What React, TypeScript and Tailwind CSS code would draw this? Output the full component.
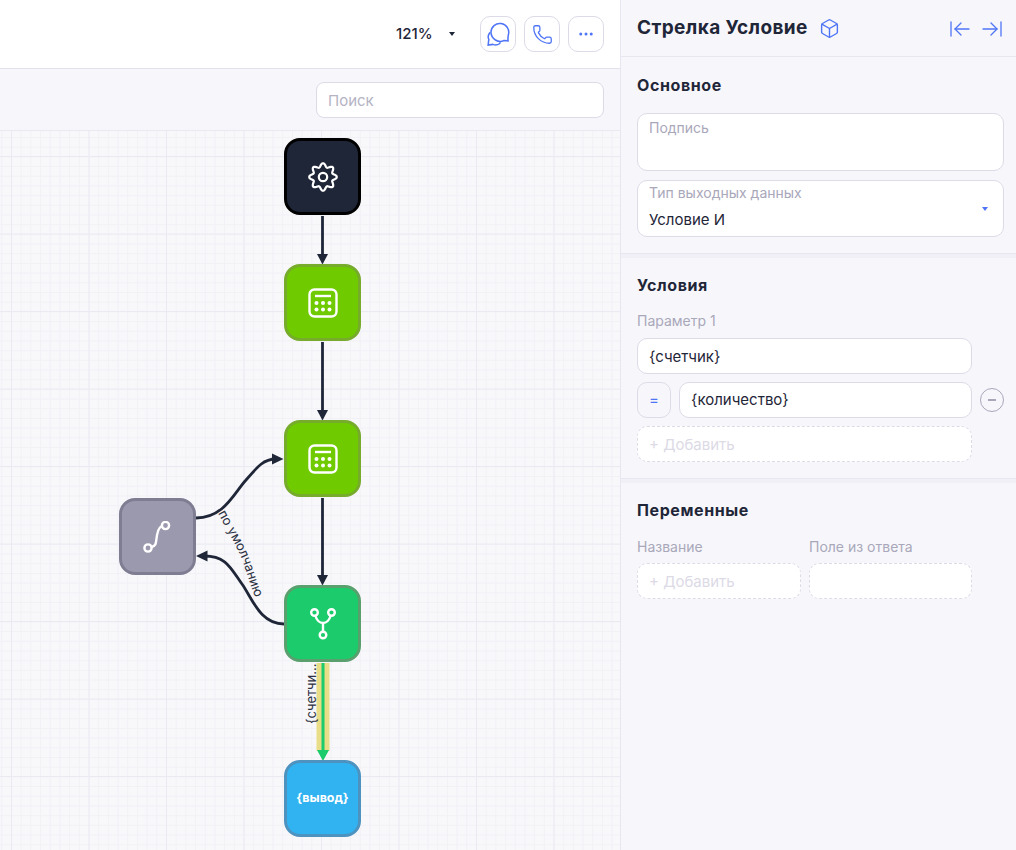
import { ArrowLeftToLine, ArrowRightToLine, Box, Ellipsis, Phone } from "lucide-react"

// 8 rounded teeth, traced around the centre of a 30x30 box
const gearOutline =
  Array.from({ length: 96 }, (_, i) => {
    const angle = (i / 96) * Math.PI * 2
    const radius = 11.9 + 1.9 * Math.cos(angle * 8)
    return `${(15 + radius * Math.sin(angle)).toFixed(2)} ${(15 - radius * Math.cos(angle)).toFixed(2)}`
  })
    .join("L")
    .replace(/^/, "M") + "Z"

function GearIcon() {
  return (
    <svg width="30" height="30" viewBox="0 0 30 30" fill="none" stroke="white" strokeWidth="2.200">
      <path d={gearOutline} strokeLinejoin="round" />
      <circle cx="15" cy="15" r="4.200" />
    </svg>
  )
}

function CalculatorIcon() {
  return (
    <svg width="30" height="30" viewBox="0 0 30 30" fill="none" stroke="white" strokeWidth="2.400">
      <rect x="1.500" y="1.500" width="27" height="27" rx="5" />
      <path d="M7 8h16" strokeWidth="2.400" />
      <g fill="white" stroke="none">
        <circle cx="8.500" cy="15" r="2" />
        <circle cx="15" cy="15" r="2" />
        <circle cx="21.500" cy="15" r="2" />
        <circle cx="8.500" cy="21.500" r="2" />
        <circle cx="15" cy="21.500" r="2" />
        <circle cx="21.500" cy="21.500" r="2" />
      </g>
    </svg>
  )
}

function RouteIcon() {
  return (
    <svg width="30" height="32" viewBox="0 0 30 32" fill="none" stroke="white" strokeWidth="2.400">
      <circle cx="5" cy="27" r="3.600" />
      <circle cx="22.500" cy="4.500" r="3.600" />
      <path d="M8.500 26c6-1 4-7 6-14 1-4 2-6 4.500-7" />
    </svg>
  )
}

function BranchIcon() {
  return (
    <svg width="26" height="32" viewBox="0 0 26 32" fill="none" stroke="white" strokeWidth="2.400">
      <circle cx="4.500" cy="4.500" r="3.300" />
      <circle cx="21.500" cy="4.500" r="3.300" />
      <circle cx="13" cy="27" r="3.300" />
      <path d="M13 23.500V15M5.500 8c1 4 4 7 7.500 7s6.500-3 7.500-7" />
    </svg>
  )
}

function ChatIcon() {
  return (
    <svg width="26" height="26" viewBox="0 0 24 24" fill="none" stroke="#4f75f6" strokeWidth="1.400">
      <path d="M5.500 10.500a8.200 8.200 0 1 1 16 2.500c-.3 2-.5 3-.2 5.300l-4-.2c-5 2.500-11.500-1.500-11.800-7.600Z" />
      <path d="M4.800 10.500c-1.800 2-2.300 4.500-1.300 6.500l-.6 5.200 4.400-.6c2 .8 4.200.8 6-.6l1-1.300" />
    </svg>
  )
}

function IconButton({ children }: { children: React.ReactNode }) {
  return (
    <button className="flex h-9 w-9 items-center justify-center rounded-[10px] border border-[#dddbe8] bg-white">
      {children}
    </button>
  )
}

function Node({ className, children }: { className: string; children: React.ReactNode }) {
  return (
    <div
      className={
        "absolute flex h-[77px] w-[77px] items-center justify-center rounded-[16px] border-[3px] " + className
      }
    >
      {children}
    </div>
  )
}

function Edges() {
  return (
    <svg className="absolute top-0 left-0" width="620" height="720" viewBox="0 130 620 720" fill="none">
      <path d="M316.500 662h13v88h-13z" fill="#e9dd87" />
      <path d="M323 662v88" stroke="#1ccb6b" strokeWidth="3" />
      <path d="M317 749h12l-6 11z" fill="#1ccb6b" />
      <g stroke="#1f2638" strokeWidth="2.800">
        <path d="M322.500 215v40" />
        <path d="M322.500 341v70" />
        <path d="M322.500 497v78" />
        <path d="M196 517c28 0 38-25 50-38 12-14 18-21 30-21" />
        <path d="M284 623c-24 0-32-26-42-40-12-17-16-28-38-28" />
      </g>
      <g fill="#1f2638">
        <path d="M317 253h11l-5.500 10.500z" />
        <path d="M317 409h11l-5.500 10.500z" />
        <path d="M317 574h11l-5.500 10.500z" />
        <path d="M272 452.500v11l11.500-5.500z" />
        <path d="M207.500 549.500v11l-11.500-5.500z" />
      </g>
      <defs>
        <path id="default-edge-label" d="M218 512c8 16 16 28 22 42 6 13 9 28 16 44" />
      </defs>
      <text fontSize="13" fill="#2b3040" fontFamily="Inter, sans-serif">
        <textPath href="#default-edge-label">по умолчанию</textPath>
      </text>
      <text x="-723" y="316" transform="rotate(-90)" fontSize="13" fill="#2b3040" fontFamily="Inter, sans-serif">
        {"{счетчи..."}
      </text>
    </svg>
  )
}

function Canvas() {
  return (
    <div className="relative flex-1 bg-[#f8f8fb] bg-[linear-gradient(#eaeaf2_1px,transparent_1px),linear-gradient(90deg,#eaeaf2_1px,transparent_1px),linear-gradient(#f1f1f6_1px,transparent_1px),linear-gradient(90deg,#f1f1f6_1px,transparent_1px)] bg-[size:77.500px_77.500px,77.500px_77.500px,9.690px_9.690px,9.690px_9.690px] bg-[position:11px_25px,11px_25px,1.300px_6px,1.300px_6px]">
      <Edges />
      <Node className="top-[7px] left-[284px] border-black bg-[#1f2638]">
        <GearIcon />
      </Node>
      <Node className="top-[133px] left-[284px] border-[#76ab2c] bg-[#6fcb00]">
        <CalculatorIcon />
      </Node>
      <Node className="top-[289px] left-[284px] border-[#76ab2c] bg-[#6fcb00]">
        <CalculatorIcon />
      </Node>
      <Node className="top-[367px] left-[119px] border-[#7f7d92] bg-[#9b99ae]">
        <RouteIcon />
      </Node>
      <Node className="top-[454px] left-[284px] border-[#5aa06f] bg-[#1ccb6b]">
        <BranchIcon />
      </Node>
      <Node className="top-[629px] left-[284px] border-[#4e93c0] bg-[#30b3f0]">
        <span className="text-[12.500px] font-bold text-white">{"{вывод}"}</span>
      </Node>
    </div>
  )
}

function Field({ className, children }: { className: string; children?: React.ReactNode }) {
  return (
    <div className={"flex h-[36px] items-center rounded-[10px] border border-[#dddbe8] bg-white px-[11px] text-[15px] text-[#1f2638] " + className}>
      {children}
    </div>
  )
}

function DashedField({ className, children }: { className: string; children?: React.ReactNode }) {
  return (
    <div className={"flex h-[36px] items-center rounded-[10px] border border-dashed border-[#dddbe8] bg-white px-[11px] pt-[2px] text-[15px] text-[#dcdae6] " + className}>
      {children}
    </div>
  )
}

function SectionTitle({ children }: { children: React.ReactNode }) {
  return <h3 className="text-[16px] leading-5 font-bold tracking-[0.6px] text-[#1f2638]">{children}</h3>
}

function Separator() {
  return <div className="h-[5px] border-t border-[#e8e7f1] bg-[#f0f0f6]" />
}

function Panel() {
  return (
    <aside className="flex w-[396px] flex-col border-l border-[#e8e7f1] bg-[#f7f7fb]">
      <div className="flex h-[57px] items-center border-b border-[#e8e7f1] pr-3 pl-4">
        <span className="text-[19px] font-bold tracking-[0.4px] text-[#1f2638]">Стрелка Условие</span>
        <Box className="ml-[11px]" size={21} color="#4f75f6" strokeWidth={1.6} />
        <ArrowLeftToLine className="mt-[1px] ml-auto" size={24} color="#4f75f6" strokeWidth={1.3} />
        <ArrowRightToLine className="mt-[1px] ml-2" size={24} color="#4f75f6" strokeWidth={1.3} />
      </div>

      <section className="h-[196px] pt-[18px] pr-[12px] pl-4">
        <SectionTitle>Основное</SectionTitle>
        <div className="mt-[18px] h-[58px] rounded-[10px] border border-[#dddbe8] bg-white px-[11px] pt-[3px] text-[14px] text-[#a9a7ba]">
          Подпись
        </div>
        <div className="relative mt-[9px] h-[57px] rounded-[10px] border border-[#dddbe8] bg-white px-[11px] pt-[2px]">
          <div className="text-[14px] leading-5 text-[#a9a7ba]">Тип выходных данных</div>
          <div className="mt-[7px] text-[15px] leading-5 text-[#1f2638]">Условие И</div>
          <div className="absolute top-[26px] right-[15px] h-0 w-0 border-x-[3px] border-t-[4px] border-x-transparent border-t-[#4f75f6]" />
        </div>
      </section>
      <Separator />

      <section className="h-[220px] pt-[17px] pr-[12px] pl-4">
        <SectionTitle>Условия</SectionTitle>
        <div className="mt-[16px] text-[14px] leading-5 text-[#a9a7ba]">Параметр 1</div>
        <Field className="mt-[7px] w-[335px]">
          <span className="pt-[2px]">{"{счетчик}"}</span>
        </Field>
        <div className="mt-2 flex items-center">
          <div className="flex h-[36px] w-[34px] items-center justify-center rounded-[10px] border border-[#dddbe8] bg-[#f7f7fb] text-[15px] text-[#4f75f6]">
            =
          </div>
          <Field className="ml-2 w-[293px]">{"{количество}"}</Field>
          <div className="ml-2 flex h-6 w-6 items-center justify-center rounded-full border border-[#a9a7ba]">
            <div className="h-[2px] w-2 bg-[#a9a7ba]" />
          </div>
        </div>
        <DashedField className="mt-2 w-[335px]">+ Добавить</DashedField>
      </section>
      <Separator />

      <section className="pt-[17px] pl-4">
        <SectionTitle>Переменные</SectionTitle>
        <div className="mt-[17px] flex gap-2 text-[14px] leading-5 text-[#a9a7ba]">
          <span className="w-[164px]">Название</span>
          <span>Поле из ответа</span>
        </div>
        <div className="mt-[6px] flex gap-2">
          <DashedField className="w-[164px]">+ Добавить</DashedField>
          <DashedField className="w-[163px]" />
        </div>
      </section>
    </aside>
  )
}

export default function App() {
  return (
    <div className="flex h-[850px] w-[1016px] overflow-hidden bg-white font-['Inter',sans-serif]">
      <main className="flex w-[620px] flex-col">
        {/* top bar */}
        <div className="flex h-[69px] items-center border-b border-[#e3e2ec] bg-white pr-4">
          <span className="ml-[396px] text-[15px] font-medium text-[#1f2638]">121%</span>
          <div className="ml-[16px] h-0 w-0 border-x-[3px] border-t-[4px] border-x-transparent border-t-[#1f2638]" />
          <div className="ml-auto flex gap-2">
            <IconButton>
              <ChatIcon />
            </IconButton>
            <IconButton>
              <Phone size={21} color="#4f75f6" strokeWidth={1.5} />
            </IconButton>
            <IconButton>
              <Ellipsis size={18} color="#4f75f6" strokeWidth={2} />
            </IconButton>
          </div>
        </div>
        {/* search */}
        <div className="flex h-[62px] items-center justify-end border-b border-[#e9e9f2] bg-[#f7f7fb] pr-4">
          <div className="flex h-[36px] w-[288px] items-center rounded-[8px] border border-[#dddbe8] bg-white px-[11px] pt-[3px] text-[15px] text-[#b5b3c4]">
            Поиск
          </div>
        </div>
        <Canvas />
      </main>
      <Panel />
    </div>
  )
}
